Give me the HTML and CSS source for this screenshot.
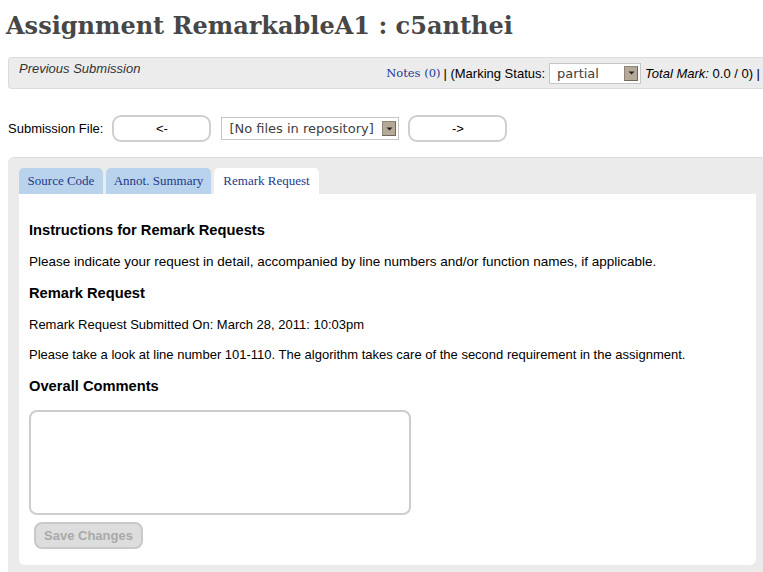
FILE: index.html
```html
<!DOCTYPE html>
<html>
<head>
<meta charset="utf-8">
<link rel="stylesheet" href="styles.css">
</head>
<body>
<h1 class="title">Assignment RemarkableA1 : c5anthei</h1>
<div class="subbar">
  <div class="prev">Previous Submission</div>
  <div class="status">
    <a class="notes" href="#">Notes (0)</a>
    <span class="sep">| (Marking Status:</span>
    <span class="fake-select status-select"><span class="fs-text">partial</span><span class="fs-arrow"><svg width="9" height="6" viewBox="0 0 9 6"><path d="M1.5 1.5h6L4.5 4.5z" fill="#222"/></svg></span></span>
    <span class="total"><em>Total Mark:</em> 0.0 / 0) |</span>
  </div>
</div>
<div class="filerow">
  <span class="flabel">Submission File:</span>
  <button class="navbtn">&lt;-</button>
  <span class="fake-select file-select"><span class="fs-text">[No files in repository]</span><span class="fs-arrow"><svg width="9" height="6" viewBox="0 0 9 6"><path d="M1.5 1.5h6L4.5 4.5z" fill="#222"/></svg></span></span>
  <button class="navbtn">-&gt;</button>
</div>
<div class="panel">
  <div class="tabs">
    <div class="tab">Source Code</div>
    <div class="tab">Annot. Summary</div>
    <div class="tab active">Remark Request</div>
  </div>
  <div class="content">
    <h3 class="h3 first">Instructions for Remark Requests</h3>
    <p class="p wide">Please indicate your request in detail, accompanied by line numbers and/or function names, if applicable.</p>
    <h3 class="h3">Remark Request</h3>
    <p class="p">Remark Request Submitted On: March 28, 2011: 10:03pm</p>
    <p class="p">Please take a look at line number 101-110. The algorithm takes care of the second requirement in the assignment.</p>
    <h3 class="h3">Overall Comments</h3>
    <div class="textarea"></div>
    <button class="save" disabled>Save Changes</button>
  </div>
</div>
</body>
</html>
```
FILE: styles.css
```css
html, body {
  margin: 0;
  padding: 0;
  overflow: hidden;
}
body {
  width: 763px;
  height: 572px;
  font-family: "Liberation Sans", Arial, sans-serif;
  font-size: 13px;
  color: #000;
  background: #fff;
}
.title {
  font-family: "DejaVu Serif", serif;
  font-weight: bold;
  font-size: 24px;
  color: #474747;
  margin: 0;
  padding: 11px 0 0 6px;
  height: 46px;
  box-sizing: border-box;
  line-height: 30px;
}
.subbar {
  margin: 11px 0 0 8px;
  width: 757px;
  height: 32px;
  box-sizing: border-box;
  background: #ececec;
  border: 1px solid #dcdcdc;
  border-right: none;
  border-radius: 4px 0 0 4px;
  display: flex;
  justify-content: space-between;
}
.prev {
  font-style: italic;
  color: #333;
  padding: 3px 0 0 10px;
  font-size: 13px;
}
.status {
  display: flex;
  align-items: center;
  padding-right: 5px;
  font-size: 13px;
  white-space: nowrap;
}
.notes {
  font-family: "DejaVu Serif", "Liberation Serif", serif;
  font-size: 11.5px;
  color: #23399b;
  text-decoration: none;
  margin-right: 3px;
}
.sep {
  margin-right: 4px;
}
.total {
  margin-left: 4px;
}
.fake-select {
  display: inline-flex;
  align-items: center;
  justify-content: space-between;
  box-sizing: border-box;
  border: 1px solid #c6c6c6;
  background: #fff;
  font-family: "DejaVu Sans", sans-serif;
  font-size: 13px;
  color: #404040;
  padding: 0 2px 0 7px;
  white-space: nowrap;
}
.status-select {
  width: 92px;
  height: 21px;
}
.fs-arrow {
  width: 14px;
  height: 15px;
  background: #b5a998;
  border: 1px solid #8f8677;
  border-right-color: #6f675a;
  border-bottom-color: #6f675a;
  box-sizing: border-box;
  display: flex;
  align-items: center;
  justify-content: center;
  flex: none;
}
.filerow {
  display: flex;
  align-items: center;
  margin: 26px 0 0 8px;
  height: 27px;
}
.flabel {
  margin-right: 9px;
}
.navbtn {
  width: 99px;
  height: 27px;
  box-sizing: border-box;
  border: 2px solid #cfcfcf;
  border-radius: 9px;
  background: #fff;
  font-family: "Liberation Sans", Arial, sans-serif;
  font-size: 13px;
  color: #000;
  padding: 0;
}
.file-select {
  width: 178px;
  height: 23px;
  margin: 0 9px 0 10px;
}
.panel {
  margin: 15px 0 0 8px;
  width: 770px;
  height: 420px;
  box-sizing: border-box;
  background: #ebebeb;
  border-top: 1px solid #dcdcdc;
  border-radius: 6px 0 0 0;
  padding: 10px 0 0 11px;
}
.tabs {
  display: flex;
  gap: 3px;
  height: 26px;
}
.tab {
  background: #b9d3ec;
  color: #1d3a8c;
  font-family: "Liberation Serif", "Times New Roman", serif;
  font-size: 13px;
  border-radius: 5px 5px 0 0;
  padding: 0;
  text-align: center;
  white-space: nowrap;
  line-height: 25px;
  height: 26px;
  box-sizing: border-box;
}
.tab:nth-child(1) { width: 84px; }
.tab:nth-child(2) { width: 105px; }
.tab.active {
  background: #fff;
  width: 105px;
}
.content {
  background: #fff;
  width: 737px;
  height: 371px;
  box-sizing: border-box;
  border-radius: 0 0 6px 6px;
  padding: 1px 0 0 10px;
}
.h3 {
  font-size: 14.7px;
  font-weight: bold;
  margin: 0;
  line-height: 18px;
}
.h3.first {
  margin-top: 26px;
}
.p {
  margin: 15px 0 0 0;
  line-height: 16px;
}
.p.wide {
  font-size: 13.5px;
}
.p + .h3 {
  margin-top: 14px;
}
.p + .p {
  margin-top: 14px;
}
.textarea {
  margin-top: 15px;
  width: 382px;
  height: 105px;
  box-sizing: border-box;
  border: 2px solid #cdcdcd;
  border-radius: 8px;
}
.save {
  display: block;
  margin: 7px 0 0 5px;
  width: 109px;
  height: 27px;
  box-sizing: border-box;
  background: #dddddd;
  border: 2px solid #c9c9c9;
  border-radius: 8px;
  color: #a9a9a9;
  font-family: "Liberation Sans", Arial, sans-serif;
  font-weight: bold;
  font-size: 13px;
  padding: 0;
}
```
